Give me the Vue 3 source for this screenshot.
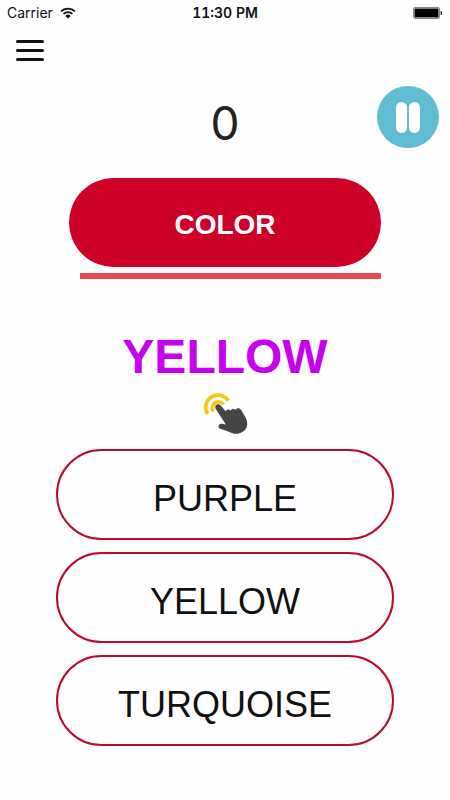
<script setup>
import { ref } from 'vue'

const score = ref(0)
const word = ref('YELLOW')
const answers = ['PURPLE', 'YELLOW', 'TURQUOISE']
</script>

<template>
  <div class="screen">
    <div class="status">
      <div class="carrier">
        <span>Carrier</span>
        <svg class="wifi" viewBox="0 0 16 12" aria-hidden="true">
          <g fill="none" stroke="#111" stroke-width="1.7">
            <path d="M1 4.4a10 10 0 0 1 14 0" />
            <path d="M3.5 7a6.4 6.4 0 0 1 9 0" />
          </g>
          <path d="M8 11.4L5.4 8.9a3.7 3.7 0 0 1 5.2 0z" fill="#111" />
        </svg>
      </div>
      <span class="time">11:30 PM</span>
      <svg class="battery" viewBox="0 0 30 12" aria-hidden="true">
        <rect x="0.5" y="0.5" width="26" height="11" rx="1.5" fill="#fff" stroke="#888" />
        <rect x="1.5" y="1.5" width="24" height="9" fill="#000" />
        <path d="M28 4.2q1.4 1.8 0 3.6z" fill="#000" stroke="#000" stroke-width=".6" />
      </svg>
    </div>

    <button class="menu" aria-label="Menu">
      <span></span>
      <span></span>
      <span></span>
    </button>

    <header class="top">
      <div class="score">{{ score }}</div>
      <button class="pause" aria-label="Pause">
        <svg viewBox="0 0 62 62" aria-hidden="true">
          <circle cx="31" cy="31" r="31" fill="#5fbcd3" />
          <rect x="19" y="16" width="11" height="31" rx="5.5" fill="#fff" />
          <rect x="32" y="16" width="11" height="31" rx="5.5" fill="#fff" />
        </svg>
      </button>
    </header>

    <main class="game">
      <button class="mode">COLOR</button>
      <div class="timer"></div>
      <h1 class="word">{{ word }}</h1>
      <svg class="tap" viewBox="0 0 46 44" aria-hidden="true">
        <g fill="none" stroke="#f2c81c" stroke-width="3.8">
          <path d="M5.6 22A12 12 0 1 1 26.2 8.8" />
          <path d="M11.4 19.4A6 6 0 1 1 21.6 12.6" />
        </g>
        <path
          d="M13.5 16.6C12.2 13 16.6 10.8 18.7 13.6L23.7 19.2C24.6 17.2 27.4 17.1 28.5 18.6C29.4 16.6 32.3 16.5 33.4 18.1C34.4 15.8 37.7 15.5 39 17.8L43.9 26C46.2 31.5 45.6 36 41.9 38.9C36.5 42.6 32.1 42.4 27.5 40L18.4 36.8C15.1 35.5 16.6 31.2 20 31.8L23.8 32.4Z"
          fill="#454545"
        />
      </svg>
      <div class="answers">
        <button v-for="answer in answers" :key="answer" class="answer">{{ answer }}</button>
      </div>
    </main>
  </div>
</template>

<style>
body {
  background: #fefefe;
}
</style>

<style scoped>
.screen {
  display: flex;
  flex-direction: column;
  min-height: 100vh;
  font-family: "Liberation Sans", Arial, sans-serif;
  color: #111;
}

button {
  margin: 0;
  padding: 0;
  border: 0;
  background: none;
  font: inherit;
  color: inherit;
  cursor: pointer;
}

svg {
  display: block;
}

.status {
  display: grid;
  grid-template-columns: 1fr auto 1fr;
  align-items: center;
  height: 25px;
  padding: 0 7px;
  font: 14px/24px Inter, sans-serif;
}

.carrier {
  display: flex;
  align-items: center;
  gap: 7px;
}

.wifi {
  width: 16px;
  height: 12px;
}

.time {
  font-weight: 600;
  font-variant-numeric: tabular-nums;
}

.battery {
  justify-self: end;
  width: 30px;
  height: 12px;
}

.menu {
  display: flex;
  flex-direction: column;
  align-self: flex-start;
  gap: 6px;
  width: 28px;
  margin: 15px 0 0 16px;
}

.menu span {
  height: 3px;
  border-radius: 2px;
  background: #111;
}

.top {
  display: grid;
  grid-template-columns: 1fr auto 1fr;
  align-items: center;
  padding: 0 11px;
  margin-top: 25px;
}

.score {
  grid-column: 2;
  padding-top: 12px;
  font: 46px/50px Inter, sans-serif;
  color: #222;
}

.pause {
  justify-self: end;
  width: 62px;
  height: 62px;
  border-radius: 50%;
}

.game {
  display: flex;
  flex-direction: column;
  padding: 30px 56px;
}

.mode {
  height: 89px;
  margin: 0 13px;
  padding-top: 4px;
  border-radius: 45px;
  background: #cd0027;
  color: #fff;
  font-size: 28px;
  font-weight: bold;
}

.timer {
  height: 6px;
  margin: 6px 13px 0 24px;
  background: #e84653;
}

.word {
  margin: 50px 0 0;
  font-size: 48px;
  line-height: 56px;
  text-align: center;
  color: #c800f0;
}

.tap {
  align-self: center;
  width: 46px;
  height: 44px;
  margin-top: 7px;
}

.answers {
  display: flex;
  flex-direction: column;
  gap: 12px;
  margin-top: 13px;
}

.answer {
  height: 91px;
  padding-top: 8px;
  border: 2px solid #bd0a2c;
  border-radius: 46px;
  font-size: 36px;
}
</style>
